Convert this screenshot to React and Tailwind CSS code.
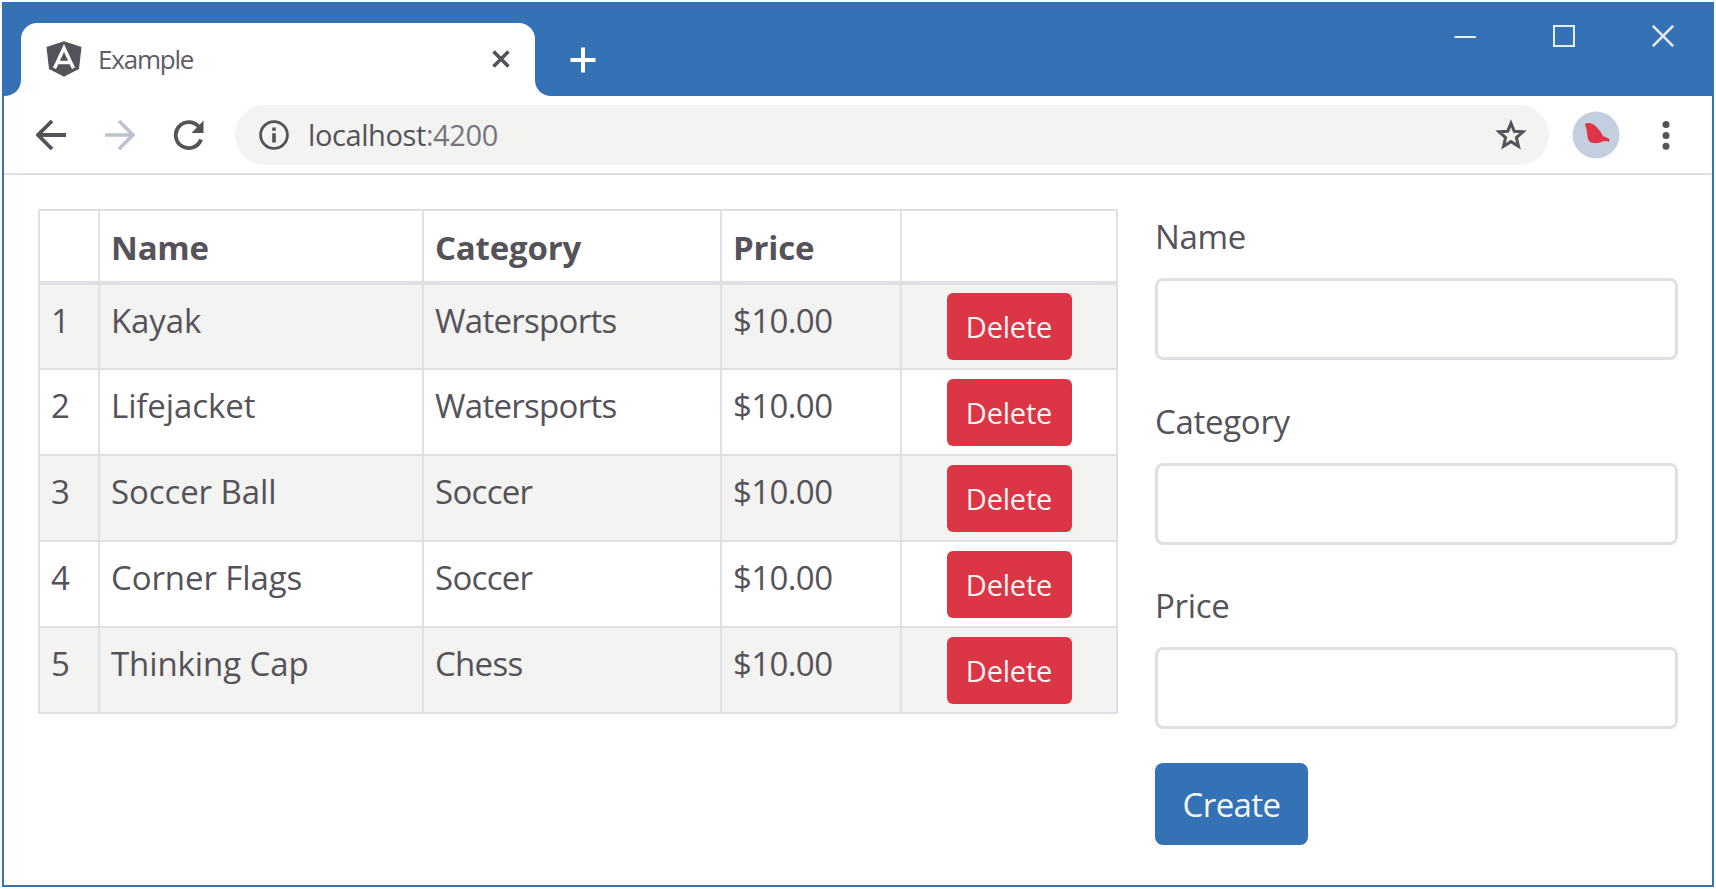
const PRODUCTS = [
  { id: 1, name: "Kayak", category: "Watersports", price: "$10.00" },
  { id: 2, name: "Lifejacket", category: "Watersports", price: "$10.00" },
  { id: 3, name: "Soccer Ball", category: "Soccer", price: "$10.00" },
  { id: 4, name: "Corner Flags", category: "Soccer", price: "$10.00" },
  { id: 5, name: "Thinking Cap", category: "Chess", price: "$10.00" },
];

function AngularIcon() {
  return (
    <svg className="h-9 w-9 shrink-0" viewBox="0 0 36 36">
      <path d="M18 0.3 L35.5 6 L33 28 L18 35.7 L3 28 L0.5 6 Z" fill="#55525a" />
      <path d="M8.5 27.3 L18 7 L27.5 27.3 M12.5 21.5 H23.5" fill="none" stroke="#fff" strokeWidth="3.4" />
    </svg>
  );
}

function TitleBar() {
  return (
    <div className="flex h-[92px] items-stretch text-white">
      <div className="flex w-[17px] items-end bg-[#3471b5]">
        <svg className="h-4 w-[17px]" viewBox="0 0 17 16">
          <path d="M17 0 V16 H0 C10 16 17 9 17 0 Z" fill="#fff" />
        </svg>
      </div>
      <div className="mt-[19px] flex w-[514px] items-center rounded-t-[16px] bg-white pb-[1px] pl-[25px] pr-[25px]">
        <AngularIcon />
        <span className="ml-[16px] grow text-[26px] leading-9 tracking-[-1.2px] text-[#5f5c64]">Example</span>
        <svg className="h-[18px] w-[18px]" viewBox="0 0 18 18">
          <path d="M1.5 1.5 L16.5 16.5 M16.5 1.5 L1.5 16.5" stroke="#55525a" strokeWidth="3.6" />
        </svg>
      </div>
      <div className="flex w-4 items-end">
        <svg className="h-4 w-4" viewBox="0 0 16 16">
          <path d="M0 0 V16 H16 C7 16 0 9 0 0 Z" fill="#fff" />
        </svg>
      </div>
      <div className="flex grow justify-between pl-[19px] pr-[38px]">
        <svg className="mt-[43px] h-[26px] w-[26px]" viewBox="0 0 26 26">
          <path d="M13 0.5 V25.5 M0.5 13 H25.5" stroke="#fff" strokeWidth="4" />
        </svg>
        <div className="mt-[21px] flex h-[22px] gap-[77px]">
          <svg className="h-[22px] w-[22px]" viewBox="0 0 22 22">
            <path d="M0.5 12 H22" stroke="#e6ebf2" strokeWidth="2" />
          </svg>
          <svg className="h-[22px] w-[22px]" viewBox="0 0 22 22">
            <path d="M1 1 H21 V21 H1 Z" fill="none" stroke="#e6ebf2" strokeWidth="2" />
          </svg>
          <svg className="h-[22px] w-[22px]" viewBox="0 0 22 22">
            <path d="M0.8 0.8 L21.2 21.2 M21.2 0.8 L0.8 21.2" stroke="#e6ebf2" strokeWidth="2.6" />
          </svg>
        </div>
      </div>
    </div>
  );
}

function Toolbar() {
  return (
    <div className="flex h-[79px] items-center border-b-2 border-[#dfe0e3] bg-white pl-[32px]">
      <svg className="h-[30px] w-[30px]" viewBox="0 0 30 30">
        <path d="M30 15 H2.5 M16 1 L2 15 L16 29" fill="none" stroke="#55525a" strokeWidth="3.8" />
      </svg>
      <svg className="ml-[39px] h-[30px] w-[30px]" viewBox="0 0 30 30">
        <path d="M0 15 H27.5 M14 1 L28 15 L14 29" fill="none" stroke="#bcc3d0" strokeWidth="3.6" />
      </svg>
      <svg className="ml-[38px] h-[32px] w-[32px]" viewBox="0 0 32 32">
        <path d="M28 20.5 A13 13 0 1 1 25.5 7.5" fill="none" stroke="#55525a" strokeWidth="3.8" />
        <path d="M30.5 1.5 V14 H18.5 Z" fill="#55525a" />
      </svg>
      <div className="ml-[30px] flex h-[60px] w-[1314px] items-center rounded-full bg-[#f3f3f2] pl-[24px] pr-[22px]">
        <svg className="h-[30px] w-[30px]" viewBox="0 0 30 30">
          <circle cx="15" cy="15" r="13.4" fill="none" stroke="#55525a" strokeWidth="2.8" />
          <path d="M15 13.2 V22.5 M15 7.5 V10.8" stroke="#55525a" strokeWidth="3.6" />
        </svg>
        <span className="ml-[19px] grow text-[29px] leading-10 tracking-[-0.4px] text-[#55525a]">
          localhost<span className="text-[#77747c]">:4200</span>
        </span>
        <svg className="h-[32px] w-[32px]" viewBox="0 0 32 32">
          <path
            d="M16 4.2 L19.3 12.2 L28 12.8 L21.4 18.6 L23.5 27.2 L16 22.6 L8.5 27.2 L10.6 18.6 L4 12.8 L12.7 12.2 Z"
            fill="none"
            stroke="#55525a"
            strokeWidth="3"
          />
        </svg>
      </div>
      <svg className="ml-[23px] h-[48px] w-[48px]" viewBox="0 0 48 48">
        <circle cx="24" cy="24" r="23.5" fill="#c3cfde" />
        <path
          d="M13 13.5 C14 11.5 18 11.5 21.5 13.5 C26 16.5 29 21 31 25 L37.5 28 L37 31 L34.5 30 L30 30.5 C27 32.8 20 32.8 17.5 30.5 C15 27.5 15.5 23 14.5 18.5 Z"
          fill="#dc3545"
        />
      </svg>
      <svg className="ml-[42px] h-[30px] w-[8px]" viewBox="0 0 8 30">
        <circle cx="4" cy="4.6" r="3.5" fill="#55525a" />
        <circle cx="4" cy="15.4" r="3.5" fill="#55525a" />
        <circle cx="4" cy="26.2" r="3.5" fill="#55525a" />
      </svg>
    </div>
  );
}

const CELL = "border-2 border-[#dfdfe4] pb-0 pl-[11px] pr-2 pt-[11px] align-top";

function ProductTable() {
  return (
    <table className="h-[503px] w-[1080px] table-fixed border-collapse border-2 border-[#dfdfe4] text-left text-[33px] leading-[50px]">
      <colgroup>
        <col className="w-[60px]" />
        <col className="w-[324px]" />
        <col className="w-[298px]" />
        <col className="w-[180px]" />
        <col className="w-[216px]" />
      </colgroup>
      <thead>
        <tr className="h-[73px] font-bold">
          {["", "Name", "Category", "Price", ""].map((title, i) => (
            <th
              key={i}
              className="border-2 border-b-4 border-[#dfdfe4] pb-0 pl-[11px] pr-2 pt-[3px] tracking-[-0.2px] first:border-b-4"
            >
              {title}
            </th>
          ))}
        </tr>
      </thead>
      <tbody>
        {PRODUCTS.map((p) => (
          <tr key={p.id} className="h-[86px] odd:bg-[#f3f3f2]">
            <td className={`${CELL} tracking-[-0.3px]`}>{p.id}</td>
            <td className={`${CELL} tracking-[-0.1px]`}>{p.name}</td>
            <td className={`${CELL} tracking-[-0.7px]`}>{p.category}</td>
            <td className={`${CELL} tracking-[-0.6px]`}>{p.price}</td>
            <td className="border-2 border-[#dfdfe4] p-0 text-center">
              <button className="mx-auto block h-[67px] w-[125px] rounded-[6px] bg-[#dc3545] text-[29px] leading-[68px] tracking-[-0.2px] text-[#f3f3f2]">
                Delete
              </button>
            </td>
          </tr>
        ))}
      </tbody>
    </table>
  );
}

function ProductForm() {
  return (
    <form className="flex w-[523px] flex-col text-[33px] leading-[50px]">
      {["Name", "Category", "Price"].map((label) => (
        <label key={label} className="mb-[33.5px] block">
          <span className="mb-[16px] block h-[53px] pt-[3px] tracking-[-0.3px]">{label}</span>
          <input className="block h-[82px] w-full rounded-[8px] border-3 border-[#dfdfe4] bg-white px-6" />
        </label>
      ))}
      <button
        type="button"
        className="h-[82px] w-[153px] rounded-[8px] bg-[#3471b5] pt-[2px] tracking-[-0.6px] text-[#f5f6f8]"
      >
        Create
      </button>
    </form>
  );
}

export default function App() {
  return (
    <div className="h-[889px] w-[1716px] bg-white p-[2px] pb-0 font-['Open_Sans','Noto_Sans',sans-serif] text-[#55525a]">
      <div className="h-[885px] w-[1712px] border-2 border-[#3471b5] bg-[#3471b5]">
        <TitleBar />
        <Toolbar />
        <main className="flex h-[710px] items-start gap-[37px] bg-white pl-[34px] pt-[34px]">
          <ProductTable />
          <ProductForm />
        </main>
      </div>
    </div>
  );
}
